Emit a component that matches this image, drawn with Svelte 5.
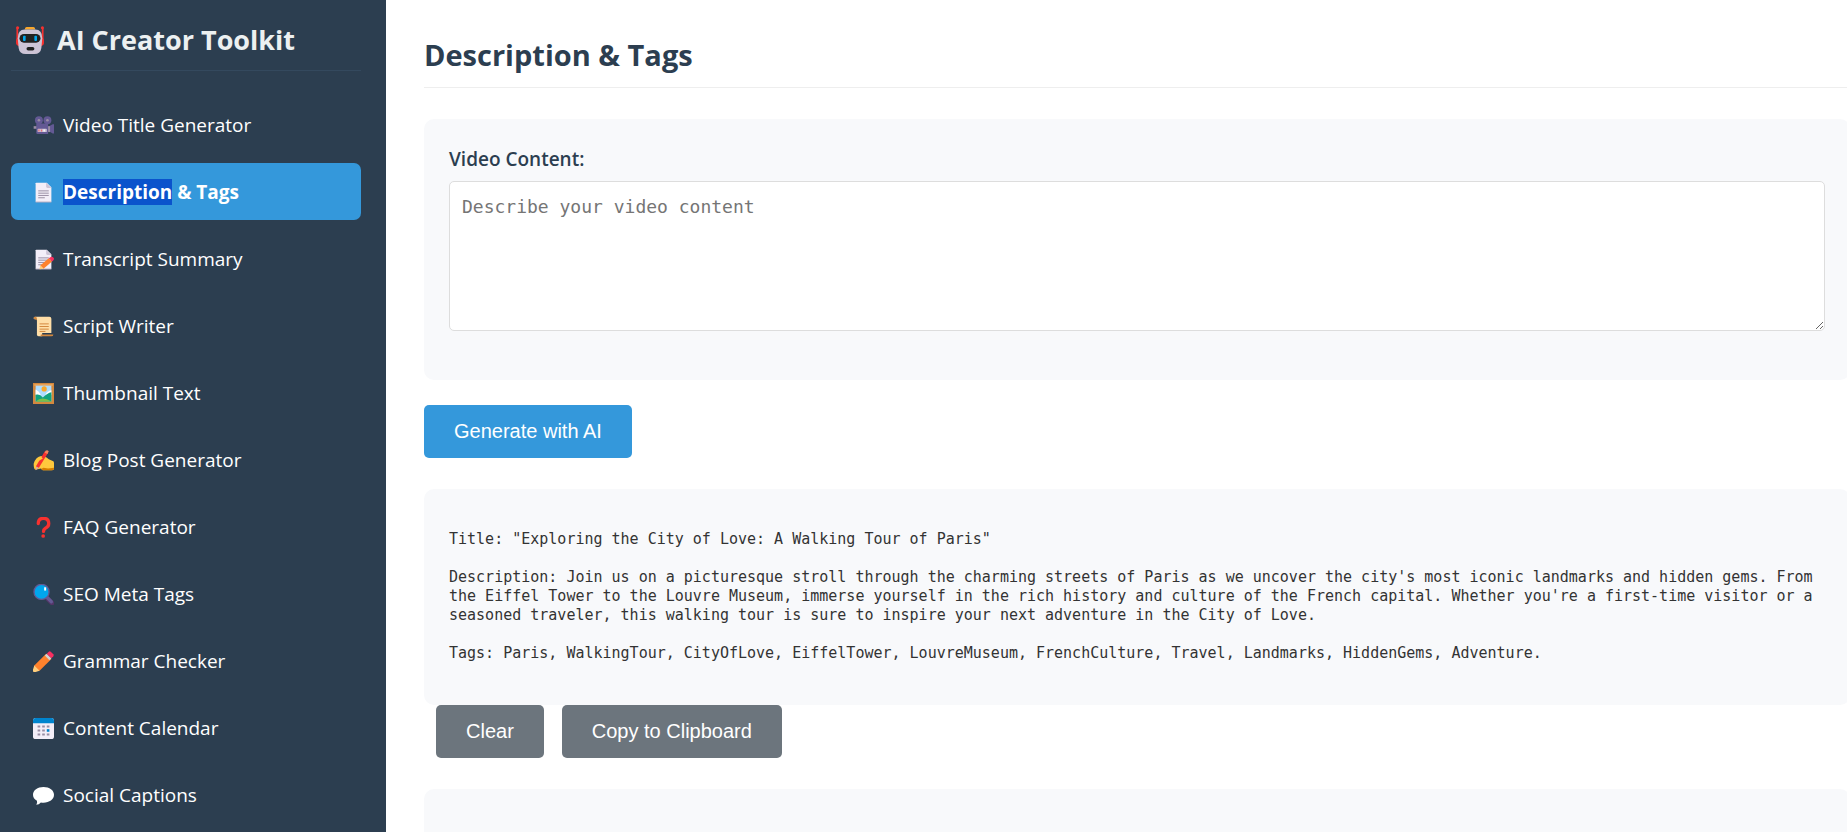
<script lang="ts">
	type Tool = { id: string; label: string };

	const tools: Tool[] = [
		{ id: 'camera', label: 'Video Title Generator' },
		{ id: 'page', label: 'Description & Tags' },
		{ id: 'memo', label: 'Transcript Summary' },
		{ id: 'scroll', label: 'Script Writer' },
		{ id: 'picture', label: 'Thumbnail Text' },
		{ id: 'writing', label: 'Blog Post Generator' },
		{ id: 'question', label: 'FAQ Generator' },
		{ id: 'search', label: 'SEO Meta Tags' },
		{ id: 'pencil', label: 'Grammar Checker' },
		{ id: 'calendar', label: 'Content Calendar' },
		{ id: 'speech', label: 'Social Captions' }
	];

	let active = $state('page');
	let content = $state('');
	let output = $state(`Title: "Exploring the City of Love: A Walking Tour of Paris"

Description: Join us on a picturesque stroll through the charming streets of Paris as we uncover the city's most iconic landmarks and hidden gems. From the Eiffel Tower to the Louvre Museum, immerse yourself in the rich history and culture of the French capital. Whether you're a first-time visitor or a seasoned traveler, this walking tour is sure to inspire your next adventure in the City of Love.

Tags: Paris, WalkingTour, CityOfLove, EiffelTower, LouvreMuseum, FrenchCulture, Travel, Landmarks, HiddenGems, Adventure.`);

	let title = $derived(tools.find((t) => t.id === active)?.label ?? '');

	function clear() {
		content = '';
		output = '';
	}

	function copy() {
		navigator.clipboard?.writeText(output);
	}
</script>

{#snippet icon(id: string)}
	<svg class="icon" viewBox="0 0 32 32" aria-hidden="true">
		{#if id === 'camera'}
			<path d="M1 17h5v4H1z" fill="#998ea4" />
			<circle cx="9" cy="8" r="6" fill="#635994" />
			<circle cx="22" cy="8" r="6" fill="#635994" />
			<circle cx="9" cy="8" r="2" fill="#998ea4" />
			<circle cx="22" cy="8" r="2" fill="#998ea4" />
			<path d="M5 13h18v16H7a2 2 0 0 1-2-2z" fill="#635994" />
			<path d="M23 18l7-4h2v14h-2l-7-4z" fill="#635994" />
			<path d="M23 17h3v9h-3z" fill="#998ea4" />
			<rect x="7" y="21" width="14" height="5" rx="1" fill="#cdc4d6" />
			<path d="M8 22h2v3H8zM12 22h2v3h-2z" fill="#f8312f" opacity=".6" />
			<path d="M16 22h2v3h-2z" fill="#fff" />
		{:else if id === 'page' || id === 'memo'}
			<path d="M4 2a1 1 0 0 1 1-1h16l7 7v22a1 1 0 0 1-1 1H5a1 1 0 0 1-1-1z" fill="#f3eef8" />
			<path d="M20 1l8 8h-6a2 2 0 0 1-2-2z" fill="#cdc4d6" />
			<path d="M4 30h24v1H4z" fill="#998ea4" />
			<path d="M8 13.500h16M8 17h16M8 20.500h16M8 24h10" stroke="#998ea4" stroke-width="1.500" />
			{#if id === 'memo'}
				<path d="M24 14l5 5-13 11-5-5z" fill="#ff822d" />
				<path d="M11 25l5 5-6 1z" fill="#ffce7c" />
				<path d="M24 14l3-2q2-1 4 1t0 4l-2 2z" fill="#f92f60" />
			{/if}
		{:else if id === 'scroll'}
			<path d="M1 3q0-2 3-2h21q3 0 3 3v22H6V5H3Q1 5 1 3z" fill="#ffdea7" />
			<path d="M1 3q0-2 2.500-2T6 4v3Q5 5 3 5T1 3z" fill="#d3883e" />
			<path d="M6 25h8v6H9q-3 0-3-3z" fill="#ffdea7" />
			<path d="M12 28h19q0 3-3 3H10q2 0 2-3z" fill="#d3883e" />
			<path d="M10 12h14M10 16h14M10 20h14M10 23.500h9" stroke="#d3883e" stroke-width="1.500" />
		{:else if id === 'picture'}
			<path d="M0 0h32v32H0z" fill="#d3883e" />
			<path d="M2 2h28v2H2z" fill="#f3ad61" />
			<path d="M4 4h24v24H4z" fill="#aeddff" />
			<path d="M4 10q5 2 8 8H4zM28 11q-6 1-9 7h9z" fill="#fff" />
			<circle cx="17" cy="9" r="4" fill="#f9a72b" />
			<path d="M4 18q6-2 11 4 7-7 13-8v14H4z" fill="#10a37f" />
			<path d="M4 28q10-9 24 0z" fill="#7abf49" />
		{:else if id === 'writing'}
			<path d="M1 21Q4 10 13 9l4 1q4 1 7 4l7 3q1 1 1 3v8q0 3-4 3H15l-3-3-8 2q-3 0-3-9z" fill="#ffc83d" />
			<path d="M12 29l4-2 7 1 9-1v1q0 3-4 3H15z" fill="#d67d00" />
			<path d="M18 2l5 2L9 27l-5 3 1-6z" fill="#f8312f" />
			<path d="M19 1q3-2 5 1l-2 4-4-2z" fill="#f4825d" />
			<path d="M5 25l4 2-5 4z" fill="#d3b6a2" />
			<path d="M7 14l5-4 3 3-5 3z" fill="#ffc83d" />
		{:else if id === 'question'}
			<path d="M8 10q0-8 8-8t8 8q0 5-5 7-3 2-3 5" fill="none" stroke="#f8312f" stroke-width="5" stroke-linecap="round" />
			<circle cx="15.500" cy="29" r="2.800" fill="#f8312f" />
		{:else if id === 'search'}
			<path d="M20 20l9 9" stroke="#533566" stroke-width="7" stroke-linecap="round" />
			<path d="M22 21l6 6" stroke="#635994" stroke-width="5" stroke-linecap="round" />
			<circle cx="13" cy="12" r="11.500" fill="#00a6ed" stroke="#635994" stroke-width="2" />
			<path d="M17 5h3v5h-3z" fill="#fff" />
		{:else if id === 'pencil'}
			<path d="M20 4l8 8L10 30l-9 1 1-9z" fill="#ff822d" />
			<path d="M2 22l8 8-6 2q-5 1-4-4z" fill="#ffce7c" />
			<path d="M18 7l3-3 7 7-3 3z" fill="#d3d3d3" />
			<path d="M21 4l3-3q2-1 3 0l4 4q1 2 0 3l-3 3z" fill="#f92f60" />
		{:else if id === 'calendar'}
			<rect x="0" y="0" width="32" height="32" rx="4" fill="#f3eef8" />
			<path d="M0 8V4q0-4 4-4h24q4 0 4 4v4z" fill="#0084ce" />
			<path d="M7 13h4M14 13h4M21 13h4M7 19h4M14 19h4M7 25h4M14 25h4M21 25h4" stroke="#998ea4" stroke-width="3" />
			<path d="M21 19h4" stroke="#0084ce" stroke-width="4" />
		{:else if id === 'speech'}
			<path d="M16 3c9 0 16 5 16 12S25 27 16 27q-2 0-4-.500Q9 30 5 30q2-3 1-6-6-3-6-9C0 8 7 3 16 3z" fill="#fff" />
		{/if}
	</svg>
{/snippet}

<div class="shell">
	<aside class="sidebar">
		<h2 class="brand">
			<svg class="robot" viewBox="0 0 32 32" aria-hidden="true">
				<path d="M1.500 3v18M30.500 3v18" stroke="#f8312f" stroke-width="2" />
				<circle cx="1.800" cy="2" r="1.800" fill="#f8312f" />
				<circle cx="30.200" cy="2" r="1.800" fill="#f8312f" />
				<path d="M4 12v11H3q-3-1-3-5t3-6zM28 12v11h1q3-1 3-5t-3-6z" fill="#f8312f" />
				<path d="M10 4q0-3 2-3h8q2 0 2 3z" fill="#f9a72b" />
				<path d="M10 4h12q8 0 8 10l-1 11q-1 7-8 7H11q-7 0-8-7L2 14Q2 4 10 4z" fill="#cdc4d6" />
				<rect x="4" y="9" width="24" height="10" rx="5" fill="#212121" />
				<rect x="8" y="11" width="3" height="6" rx="1" fill="#00a6ed" />
				<rect x="21" y="11" width="3" height="6" rx="1" fill="#00a6ed" />
				<rect x="12" y="24" width="9" height="4" rx="2" fill="#212121" />
			</svg>
			<span>AI Creator Toolkit</span>
		</h2>
		<nav class="nav">
			{#each tools as tool (tool.id)}
				<button
					type="button"
					class="nav-item"
					class:active={tool.id === active}
					aria-current={tool.id === active ? 'page' : undefined}
					onclick={() => (active = tool.id)}
				>
					{@render icon(tool.id)}
					{#if tool.id === 'page'}
						<span><mark>Description</mark> &amp; Tags</span>
					{:else}
						<span>{tool.label}</span>
					{/if}
				</button>
			{/each}
		</nav>
	</aside>

	<main class="main">
		<h1 class="title">{title}</h1>

		<section class="card form">
			<label for="video-content">Video Content:</label>
			<textarea id="video-content" placeholder="Describe your video content" bind:value={content}></textarea>
		</section>

		<button type="button" class="btn primary">Generate with AI</button>

		<section class="card output">
			<pre>{output}</pre>
		</section>

		<div class="actions">
			<button type="button" class="btn" onclick={clear}>Clear</button>
			<button type="button" class="btn" onclick={copy}>Copy to Clipboard</button>
		</div>

		<section class="card history"></section>
	</main>
</div>

<style>
	:global(body) {
		margin: 0;
		background: #fff;
	}

	.shell {
		display: flex;
		height: 100vh;
		overflow: hidden;
		font-family: 'Segoe UI', 'Open Sans', 'Noto Sans', sans-serif;
		color: #333;
	}

	.sidebar {
		flex: 0 0 386px;
		box-sizing: border-box;
		padding: 10px 25px 10px 11px;
		background: #2c3e50;
		overflow: hidden;
	}

	.brand {
		display: flex;
		align-items: center;
		gap: 13px;
		margin: 0 0 25px;
		padding: 10px 5px;
		border-bottom: 1px solid #34495e;
		font-size: 27px;
		line-height: 40px;
		font-weight: 700;
		color: #ecf0f1;
		white-space: nowrap;
	}

	.robot {
		width: 28px;
		height: 28px;
	}

	.nav {
		display: flex;
		flex-direction: column;
		gap: 10px;
	}

	.nav-item {
		display: flex;
		align-items: center;
		gap: 9px;
		padding: 16px 22px 14px;
		border: none;
		border-radius: 7px;
		background: none;
		font-family: inherit;
		font-size: 19px;
		line-height: 27px;
		color: #fff;
		text-align: left;
		white-space: nowrap;
		cursor: pointer;
	}

	.nav-item.active {
		background: #3498db;
		font-weight: 700;
		color: #fff;
	}

	.icon {
		width: 21px;
		height: 21px;
	}

	mark {
		background: #0a53cc;
		color: #fff;
	}

	.main {
		flex: 1;
		min-width: 0;
		padding: 37px 0 38px 38px;
		margin-right: -3px;
		overflow-y: auto;
		scrollbar-width: none;
	}

	.title {
		margin: 0 0 31px;
		padding-bottom: 14px;
		border-bottom: 1px solid #eee;
		font-size: 29px;
		line-height: 36px;
		font-weight: 700;
		color: #2c3e50;
	}

	.card {
		padding: 25px;
		border-radius: 10px;
		background: #f8f9fb;
	}

	.form {
		display: flex;
		flex-direction: column;
		gap: 8px;
		margin-bottom: 25px;
		padding-top: 27px;
		padding-bottom: 49px;
	}

	.form label {
		font-size: 19px;
		line-height: 27px;
		font-weight: 600;
		color: #2c3e50;
	}

	.form textarea {
		box-sizing: border-box;
		width: 100%;
		height: 150px;
		padding: 13px 12px;
		border: 1px solid #ddd;
		border-radius: 5px;
		background: #fff;
		font-family: Consolas, 'DejaVu Sans Mono', monospace;
		font-size: 18px;
		line-height: 24px;
		color: #333;
		resize: vertical;
	}

	.form textarea::placeholder {
		color: #757575;
	}

	.btn {
		padding: 15px 30px;
		border: none;
		border-radius: 5px;
		background: #6c757d;
		font-family: Arial, 'Liberation Sans', sans-serif;
		font-size: 20px;
		line-height: 23px;
		color: #fff;
		cursor: pointer;
	}

	.btn.primary {
		background: #3498db;
	}

	.output {
		margin-top: 31px;
	}

	.output pre {
		margin: 16px 0 17px;
		font-family: Consolas, 'DejaVu Sans Mono', monospace;
		font-size: 15px;
		line-height: 19px;
		white-space: pre-wrap;
	}

	.actions {
		display: flex;
		gap: 18px;
		margin: 0 0 31px 12px;
	}

	.history {
		min-height: 150px;
	}
</style>
